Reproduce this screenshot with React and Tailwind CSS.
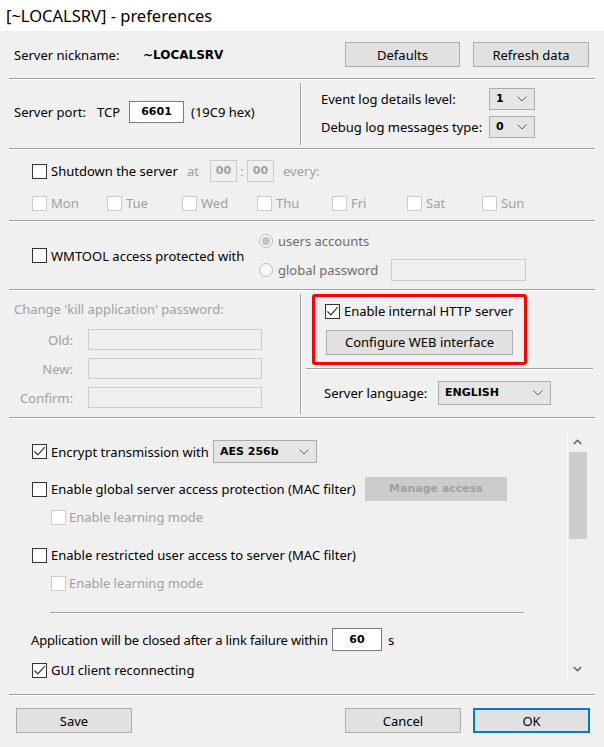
import React from "react";

function Check({ checked = false, disabled = false }) {
  return (
    <span
      className={`inline-flex w-[15px] h-[15px] shrink-0 items-center justify-center border bg-white ${
        disabled ? "border-[#cccccc]" : "border-[#333333]"
      }`}
    >
      {checked && (
        <svg width="13" height="13" viewBox="0 0 13 13">
          <polyline points="1.5,6.5 4.8,9.8 11.8,2.2" fill="none" stroke="#333333" strokeWidth="1.2" />
        </svg>
      )}
    </span>
  );
}

function Radio({ checked = false }) {
  return (
    <span className="inline-flex w-[14px] h-[14px] shrink-0 rounded-full border border-[#bcbcbc] bg-[#f7f7f7] items-center justify-center">
      {checked && <span className="w-[8px] h-[8px] rounded-full bg-[#c4c4c4]" />}
    </span>
  );
}

function Chev() {
  return (
    <svg width="10" height="6" viewBox="0 0 10 6">
      <polyline points="0.5,0.5 5,5 9.5,0.5" fill="none" stroke="#606060" strokeWidth="1" />
    </svg>
  );
}

function Select({ value, w, h = 22 }) {
  return (
    <div
      className={`flex items-center justify-between border border-[#acacac] bg-[#e5e5e5] pl-[6px] pr-[7px] ${w} ${
        h === 22 ? "h-[22px]" : h === 23 ? "h-[23px]" : "h-[24px]"
      }`}
    >
      <span className="font-['DejaVu_Sans',sans-serif] font-bold text-[11px] text-black">{value}</span>
      <Chev />
    </div>
  );
}

function Btn({ children, w, primary = false }) {
  return (
    <div
      className={`flex items-center justify-center h-[25px] bg-[#e1e1e1] text-[13px] text-black ${w} ${
        primary ? "border-2 border-[#0078d7]" : "border border-[#adadad]"
      }`}
    >
      {children}
    </div>
  );
}

const Sep = () => <div className="mx-[9px] border-t border-t-[#a0a0a0] border-b border-b-white" />;
const VSep = () => <div className="w-[2px] border-l border-l-[#a0a0a0] border-r border-r-white my-[3px]" />;

const days = ["Mon", "Tue", "Wed", "Thu", "Fri", "Sat", "Sun"];

export default function App() {
  return (
    <div className="w-[604px] h-[747px] bg-[#f0f0f0] font-['Noto_Sans',sans-serif] text-[13px] leading-[18px] text-black overflow-hidden flex flex-col">
      {/* Title */}
      <div className="h-[31px] bg-white flex items-center pl-[6px] text-[16.5px]">[~LOCALSRV] - preferences</div>

      {/* A */}
      <div className="h-[47px] flex items-center">
        <span className="ml-[14px] w-[129px]">Server nickname:</span>
        <span className="font-['DejaVu_Sans',sans-serif] font-bold text-[12px]">~LOCALSRV</span>
        <div className="ml-auto mr-[15px] flex gap-[13px]">
          <Btn w="w-[115px]">Defaults</Btn>
          <Btn w="w-[116px]">Refresh data</Btn>
        </div>
      </div>
      <Sep />

      {/* B */}
      <div className="h-[68px] flex">
        <div className="w-[300px] pt-[21px] pl-[14px] flex items-start">
          <div className="flex items-center h-[22px]">
            <span className="w-[83px]">Server port:</span>
            <span className="w-[32px]">TCP</span>
            <div className="w-[55px] h-[22px] border border-[#7a7a7a] bg-white flex items-center justify-center font-['DejaVu_Sans',sans-serif] font-bold text-[11px]">
              6601
            </div>
            <span className="ml-[7px]">(19C9 hex)</span>
          </div>
        </div>
        <VSep />
        <div className="flex flex-col pl-[19px] pt-[8px] gap-[6px]">
          <div className="flex items-center">
            <span className="w-[168px]">Event log details level:</span>
            <Select value="1" w="w-[46px]" />
          </div>
          <div className="flex items-center">
            <span className="w-[168px]">Debug log messages type:</span>
            <Select value="0" w="w-[46px]" />
          </div>
        </div>
      </div>
      <Sep />

      {/* C */}
      <div className="h-[70px] flex flex-col pt-[10px] pl-[32px]">
        <div className="flex items-center h-[22px]">
          <Check />
          <span className="ml-[4px] w-[136px]">Shutdown the server</span>
          <span className="w-[23px] text-[#a0a0a0]">at</span>
          <div className="w-[27px] h-[22px] border border-[#cccccc] flex items-center justify-center font-['DejaVu_Sans',sans-serif] font-bold text-[11px] text-[#a0a0a0]">
            00
          </div>
          <span className="w-[10px] text-center text-[#a0a0a0]">:</span>
          <div className="w-[27px] h-[22px] border border-[#cccccc] flex items-center justify-center font-['DejaVu_Sans',sans-serif] font-bold text-[11px] text-[#a0a0a0]">
            00
          </div>
          <span className="ml-[9px] text-[#a0a0a0]">every:</span>
        </div>
        <div className="flex mt-[13px] h-[16px]">
          {days.map((d) => (
            <div key={d} className="w-[75px] flex items-center">
              <Check disabled />
              <span className="ml-[4px] text-[#a0a0a0]">{d}</span>
            </div>
          ))}
        </div>
      </div>
      <Sep />

      {/* D */}
      <div className="h-[67px] flex">
        <div className="w-[259px] pl-[32px] flex items-center">
          <Check />
          <span className="ml-[4px]">WMTOOL access protected with</span>
        </div>
        <div className="flex flex-col pt-[9px] gap-[8px]">
          <div className="flex items-center h-[20px]">
            <Radio checked />
            <span className="ml-[5px] text-[#6d6d6d]">users accounts</span>
          </div>
          <div className="flex items-center h-[22px]">
            <Radio />
            <span className="ml-[5px] w-[113px] text-[#6d6d6d]">global password</span>
            <div className="w-[135px] h-[22px] border border-[#cccccc]" />
          </div>
        </div>
      </div>
      <Sep />

      {/* E */}
      <div className="h-[126px] flex">
        <div className="w-[300px] pt-[9px] flex flex-col text-[#a0a0a0]">
          <span className="pl-[14px]">Change 'kill application' password:</span>
          <div className="mt-[11px] flex flex-col gap-[8px]">
            {["Old:", "New:", "Confirm:"].map((l) => (
              <div key={l} className="flex items-center h-[21px]">
                <span className="w-[73px] text-right">{l}</span>
                <div className="ml-[15px] w-[174px] h-[21px] border border-[#cccccc]" />
              </div>
            ))}
          </div>
        </div>
        <VSep />
        <div className="flex-1 flex flex-col pt-[3px] mr-[9px]">
          <div className="ml-[10px] w-[215px] h-[71px] border-[3px] border-[#ff0000] rounded-[3px] flex flex-col pt-[6px] pl-[10px]">
            <div className="flex items-center h-[16px]">
              <Check checked />
              <span className="ml-[4px]">Enable internal HTTP server</span>
            </div>
            <div className="mt-[11px] ml-[1px]">
              <Btn w="w-[187px]">
                <span className="-mt-[1px]">Configure WEB interface</span>
              </Btn>
            </div>
          </div>
          <div className="mt-[3px] ml-[4px] mr-[2px] border-t border-t-[#a0a0a0] border-b border-b-white" />
          <div className="mt-[11px] pl-[22px] flex items-center">
            <span className="w-[114px]">Server language:</span>
            <Select value="ENGLISH" w="w-[113px]" h={24} />
          </div>
        </div>
      </div>
      <Sep />

      {/* Scroll area */}
      <div className="h-[275px] flex">
        <div className="w-[567px] flex flex-col pt-[21px]">
          <div className="flex items-center h-[23px] pl-[32px]">
            <Check checked />
            <span className="ml-[4px] w-[162px]">Encrypt transmission with</span>
            <Select value="AES 256b" w="w-[104px]" h={23} />
          </div>
          <div className="flex items-center h-[24px] mt-[14px] pl-[32px]">
            <Check />
            <span className="ml-[4px] w-[314px] whitespace-nowrap">Enable global server access protection (MAC filter)</span>
            <div className="w-[142px] h-[24px] bg-[#cccccc] flex items-center justify-center font-['DejaVu_Sans',sans-serif] font-bold text-[11px] text-[#a0a0a0]">
              Manage access
            </div>
          </div>
          <div className="flex items-center h-[16px] mt-[8px] pl-[51px]">
            <Check disabled />
            <span className="ml-[3px] text-[#a0a0a0]">Enable learning mode</span>
          </div>
          <div className="flex items-center h-[16px] mt-[22px] pl-[32px]">
            <Check />
            <span className="ml-[4px]">Enable restricted user access to server (MAC filter)</span>
          </div>
          <div className="flex items-center h-[16px] mt-[12px] pl-[51px]">
            <Check disabled />
            <span className="ml-[3px] text-[#a0a0a0]">Enable learning mode</span>
          </div>
          <div className="mt-[21px] ml-[50px] w-[474px] border-t border-t-[#a0a0a0] border-b border-b-white" />
          <div className="flex items-center h-[23px] mt-[14px] pl-[31px]">
            <span className="w-[301px] whitespace-nowrap tracking-[-0.15px]">
              Application will be closed after a link failure within
            </span>
            <div className="w-[50px] h-[23px] border border-[#7a7a7a] bg-white flex items-center justify-center font-['DejaVu_Sans',sans-serif] font-bold text-[11px]">
              60
            </div>
            <span className="ml-[6px]">s</span>
          </div>
          <div className="flex items-center h-[16px] mt-[11px] pl-[32px]">
            <Check checked />
            <span className="ml-[4px]">GUI client reconnecting</span>
          </div>
        </div>
        <div className="w-[20px] mt-[13px] h-[248px] border-l border-l-[#fafafa] flex flex-col items-center">
          <div className="h-[20px] flex items-center justify-center">
            <svg width="9" height="6" viewBox="0 0 9 6">
              <polyline points="0.8,5 4.5,1.3 8.2,5" fill="none" stroke="#606060" strokeWidth="1.6" />
            </svg>
          </div>
          <div className="w-[18px] h-[87px] bg-[#cdcdcd]" />
          <div className="mt-auto h-[20px] flex items-center justify-center mb-[1px]">
            <svg width="9" height="6" viewBox="0 0 9 6">
              <polyline points="0.8,1 4.5,4.7 8.2,1" fill="none" stroke="#606060" strokeWidth="1.6" />
            </svg>
          </div>
        </div>
      </div>
      <Sep />

      {/* Footer */}
      <div className="h-[51px] flex items-start pt-[12px]">
        <div className="ml-[16px]">
          <Btn w="w-[116px]">Save</Btn>
        </div>
        <div className="ml-auto mr-[14px] flex gap-[12px]">
          <Btn w="w-[116px]">Cancel</Btn>
          <Btn w="w-[117px]" primary>
            OK
          </Btn>
        </div>
      </div>
    </div>
  );
}
